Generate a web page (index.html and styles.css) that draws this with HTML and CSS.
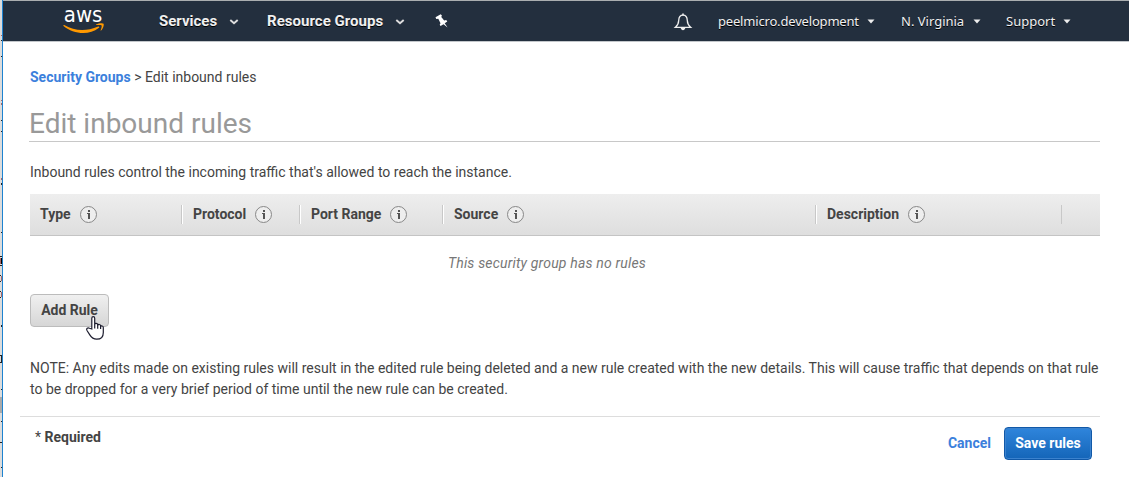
FILE: index.html
```html
<!DOCTYPE html>
<html lang="en">
<head>
<meta charset="utf-8">
<title>Edit inbound rules</title>
<link rel="stylesheet" href="styles.css">
</head>
<body>
<div class="window">
  <svg class="edge" width="3" height="477" viewBox="0 0 3 477" shape-rendering="crispEdges">
    <path fill="#dcdcdc" d="M0 0h2v477H0z"/>
    <path fill="#aaa" d="M0 397h2v16H0z"/>
    <path fill="#222" d="M1 40h1v1H1zM1 56h1v1H1zM1 120h1v1H1zM1 131h1v1H1zM1 183h1v2H1zM1 232h1v1H1zM0 256h2v1H0zM0 265h2v1H0zM0 275h1v1H0zM0 281h1v1H0zM0 291h1v1H0zM0 297h1v1H0zM1 325h1v2H1zM0 355h2v1H0zM1 356h1v6H1zM0 362h2v1H0zM1 389h1v1H1zM1 421h1v1H1zM0 442h2v1H0zM1 467h1v1H1z"/>
    <path fill="#a66" d="M1 35h1v1H1zM1 100h1v1H1zM1 103h1v2H1zM1 178h1v2H1zM0 258h1v6H0zM1 276h1v5H1zM1 292h1v5H1z"/>
    <path fill="#000" d="M1 258h1v6H1z"/>
    <path fill="#1e83d0" d="M2 0h1v477H2z"/>
  </svg>
  <div class="page">
    <header class="nav">
      <svg class="logo" width="42" height="34" viewBox="0 -4 42 34">
        <text class="logo-text" x=".8" y="16.8" textLength="38.600" lengthAdjust="spacingAndGlyphs">aws</text>
        <path fill="#f90" d="M.4 20.3c.3-.5.8-.5 1.3-.1 9.500 5.600 21 6.700 33.500 1.300.9-.4 1.600.6.8 1.200C31 26.400 26 28 20.500 28 13 28 5.800 25.400.8 21.200c-.4-.3-.5-.6-.4-.9z"/>
        <path fill="#f90" d="M33.300 19.300c2.500-1.500 6.500-1.400 7.200-.6.700.9-.2 4.900-2.400 6.900-.4.300-.7.100-.5-.3.700-1.800 1.400-4.300 1-4.900-.5-.6-3.100-.5-4.900-.3-.6.100-.8-.5-.4-.8z"/>
      </svg>
      <div class="menu services">Services<svg class="chev" width="10" height="6" viewBox="0 0 10 6"><path d="M1.300 1 5 4.300 8.700 1"/></svg></div>
      <div class="menu groups">Resource Groups<svg class="chev" width="10" height="6" viewBox="0 0 10 6"><path d="M1.300 1 5 4.300 8.700 1"/></svg></div>
      <svg class="pin" width="14" height="14" viewBox="0 0 14 14"><path fill="#fff" d="M.5 3.200 5.700.3 6.900 1.600 6.300 2.900 9.200 6.600 11.200 6 12.300 7.400 9.700 9.300 12.600 13.400 8.500 10.200 5.600 12 4.700 10.800 5.500 9.200 3.300 4.800 1.300 4.900z"/></svg>
      <svg class="bell" width="18" height="18" viewBox="0 0 18 18"><path fill="none" stroke="#eee" stroke-width="1.300" d="M9 2.200C5.700 2.200 4.800 5 4.700 7.500 4.600 10.500 3.600 12.500 1.400 14.300h15.200c-2.200-1.800-3.200-3.800-3.300-6.800C13.200 5 12.300 2.200 9 2.200z"/><path fill="#eee" d="M8.200 .5h1.600v2H8.200zM6.600 14.800h4.800C11 16.400 10.200 17.200 9 17.200s-2-.8-2.400-2.400z"/></svg>
      <div class="account user"><span class="user-name">peelmicro.development</span><svg class="caret" width="8" height="5" viewBox="0 0 8 5"><path d="M.5.500h7L4 4.500z"/></svg></div>
      <div class="account region">N. Virginia<svg class="caret" width="8" height="5" viewBox="0 0 8 5"><path d="M.5.500h7L4 4.500z"/></svg></div>
      <div class="account support">Support<svg class="caret" width="8" height="5" viewBox="0 0 8 5"><path d="M.5.500h7L4 4.500z"/></svg></div>
    </header>
    <main class="content">
      <div class="crumbs"><a class="link">Security Groups</a> &gt; Edit inbound rules</div>
      <h1 class="title">Edit inbound rules</h1>
      <p class="intro">Inbound rules control the incoming traffic that's allowed to reach the instance.</p>
      <div class="thead">
        <div class="th">Type<svg class="info" width="18" height="18" viewBox="0 0 18 18"><circle cx="8.500" cy="8.500" r="8"/><path d="M8 4h2v2H8zM7 7h3v6H8V8H7z"/></svg></div>
        <div class="th">Protocol<svg class="info" width="18" height="18" viewBox="0 0 18 18"><circle cx="8.500" cy="8.500" r="8"/><path d="M8 4h2v2H8zM7 7h3v6H8V8H7z"/></svg></div>
        <div class="th">Port Range<svg class="info" width="18" height="18" viewBox="0 0 18 18"><circle cx="8.500" cy="8.500" r="8"/><path d="M8 4h2v2H8zM7 7h3v6H8V8H7z"/></svg></div>
        <div class="th">Source<svg class="info" width="18" height="18" viewBox="0 0 18 18"><circle cx="8.500" cy="8.500" r="8"/><path d="M8 4h2v2H8zM7 7h3v6H8V8H7z"/></svg></div>
        <div class="th">Description<svg class="info" width="18" height="18" viewBox="0 0 18 18"><circle cx="8.500" cy="8.500" r="8"/><path d="M8 4h2v2H8zM7 7h3v6H8V8H7z"/></svg></div>
        <div class="th last"></div>
      </div>
      <div class="empty">This security group has no rules</div>
      <div class="add-row">
        <button class="btn add">Add Rule</button>
        <svg class="cursor" width="20" height="26" viewBox="0 0 20 26"><path d="M5.800 14V3.200c0-2.200 2.900-2.200 2.900 0v6c.2-1.300 2.800-1.200 3 .4v.6c.4-1.100 2.700-1 2.900.5v.7c.6-.9 2.700-.6 2.700 1v5c0 3.800-2.200 6.800-6.600 6.800-4 0-5.500-2-6.900-4.300L1 15.500c-1.200-2 .9-3.400 2.500-2.200z"/><path class="crease" d="M8.700 9v4.500M11.700 9.800V13.800M14.600 10.500V14"/></svg>
      </div>
      <p class="note">NOTE: Any edits made on existing rules will result in the edited rule being deleted and a new rule created with the new details. This will cause traffic that depends on that rule<br>to be dropped for a very brief period of time until the new rule can be created.</p>
    </main>
    <footer class="footer">
      <div class="required"><span class="star">*</span> Required</div>
      <div class="actions">
        <a class="link cancel">Cancel</a>
        <button class="btn save">Save rules</button>
      </div>
    </footer>
  </div>
</div>
</body>
</html>
```
FILE: styles.css
```css
body { margin: 0; background: #fff; color: #444; font: 14px/21px Roboto, sans-serif; overflow: hidden; }
* { box-sizing: border-box; }
svg { display: block; flex: none; overflow: visible; }
.window { display: flex; width: 1129px; height: 477px; }
.edge { flex: none; }
.page { flex: 1; min-width: 0; }
.nav { display: flex; align-items: flex-start; height: 42px; background: #232f3e; border-top: 1px solid #aaaeb0; border-bottom: 1px solid #c3c7cb; color: #fff; }
.logo { margin: 0 0 0 60px; }
.logo-text { font: 21.5px "DejaVu Sans", sans-serif; fill: #fff; }
.menu { display: flex; align-items: center; margin-top: 10px; font-weight: 700; font-size: 15px; color: #f0f0f0; text-shadow: 0 1px 0 #000; white-space: nowrap; }
.services { width: 108px; margin-left: 54px; }
.groups { width: 168px; letter-spacing: .03px; }
.chev { margin: 1px 0 0 12px; }
.chev path { fill: none; stroke: #ddd; stroke-width: 1.900; }
.pin { margin-top: 13px; }
.bell { margin: 12px 0 0 225px; }
.account { display: flex; align-items: center; margin-top: 10px; font: 13px/21px "Noto Sans", sans-serif; color: #f0f0f0; text-shadow: 0 1px 0 #000; white-space: nowrap; }
.user { width: 183px; margin-left: 26px; }
.user-name { letter-spacing: -.18px; }
.region { width: 105px; }
.caret { margin: 0 0 0 8px; }
.region .caret { margin-left: 9px; }
.caret path { fill: #eee; }
.content { padding: 25px 29px 0 27px; }
.crumbs { height: 21px; }
.link { color: #3b80dc; font-weight: 700; }
.title { margin: 15px 0 0 -1px; height: 39px; border-bottom: 1px solid #c8c8c8; color: #999; font-size: 28px; font-weight: 400; line-height: 42px; }
.intro { margin: 20px 0 0; height: 32px; }
.thead { display: grid; grid-template-columns: 152px 118px 143px 373px 246px 38px; align-items: center; height: 42px; background: linear-gradient(#eee, #dedede); border-bottom: 1px solid #c4c4c4; }
.th { display: flex; align-items: center; height: 19px; padding-left: 11px; border-right: 1px solid #c8c8c8; box-shadow: 1px 0 0 #fff; font-weight: 700; white-space: nowrap; margin-bottom: 1px; }
.th:first-child { padding-left: 10px; }
.th:nth-child(5) { box-shadow: none; }
.last { border: 0; box-shadow: none; }
.info { margin: 1px 0 0 9px; }
.info circle { fill: #eee; stroke: #888; stroke-width: 1; }
.info path { fill: #555; }
.empty { margin-top: 17px; height: 21px; padding-right: 36px; text-align: center; font-style: italic; letter-spacing: .18px; color: #777; }
.add-row { position: relative; margin-top: 20px; height: 33px; }
.btn { height: 33px; margin: 0; padding: 0; border-radius: 4px; font: 700 14px/21px Roboto, sans-serif; }
.add { width: 79px; border: 1px solid #bcbcbc; background: linear-gradient(#f0f0f0, #d6d6d6); color: #444; }
.cursor { position: absolute; left: 56px; top: 21px; }
.cursor path { fill: #fff; stroke: #1c1c2e; stroke-width: 1.200; }
.cursor .crease { fill: none; }
.note { margin: 31px 0 0; white-space: nowrap; }
.footer { display: flex; justify-content: space-between; margin: 16px 29px 0 17px; padding: 10px 8px 0 15px; border-top: 1px solid #ddd; }
.required { font-weight: 700; }
.star { font-weight: 400; }
.actions { display: flex; align-items: center; gap: 13px; }
.save { width: 88px; border: 1px solid #1159a8; background: linear-gradient(#2f85dc, #1465b8); box-shadow: inset 0 0 0 1px #3b82ce; color: #fff; }
```
